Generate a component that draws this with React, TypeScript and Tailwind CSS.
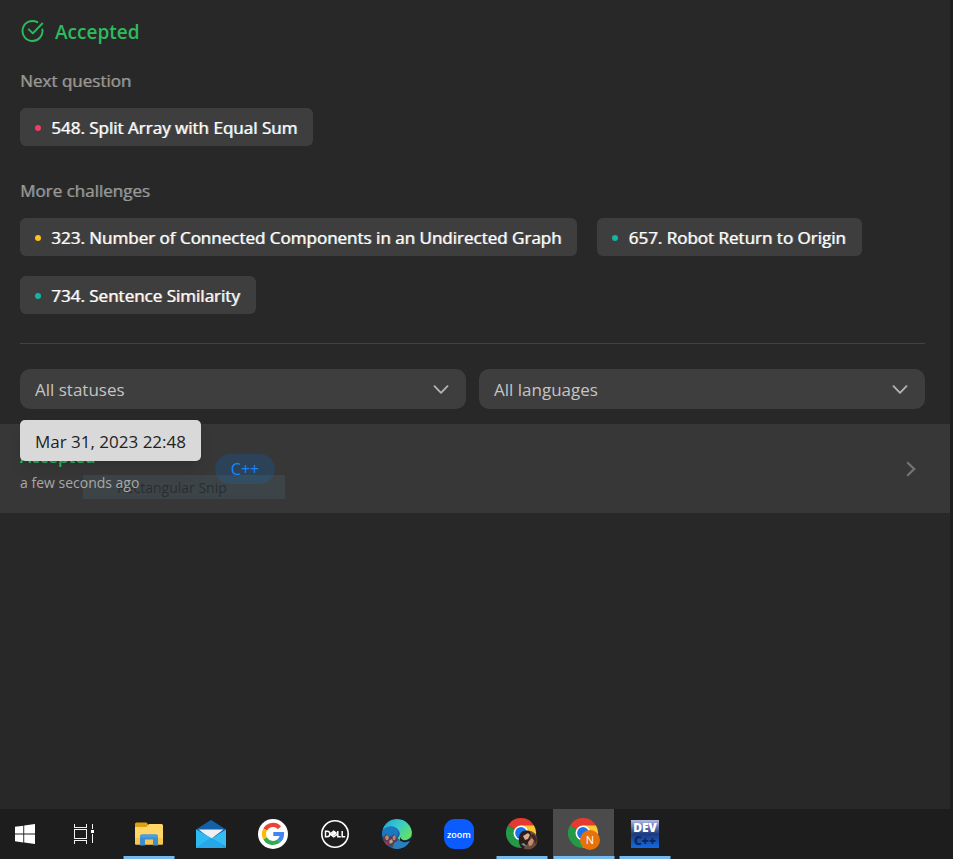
import type { ReactNode } from "react";

type Challenge = { title: string; dot: string };

const nextQuestion: Challenge[] = [
  { title: "548. Split Array with Equal Sum", dot: "bg-[#ef3e64]" },
];

const moreChallenges: Challenge[] = [
  { title: "323. Number of Connected Components in an Undirected Graph", dot: "bg-[#ffc01e]" },
  { title: "657. Robot Return to Origin", dot: "bg-[#10b5a3]" },
  { title: "734. Sentence Similarity", dot: "bg-[#10b5a3]" },
];

function ChallengeList({ heading, items }: { heading: string; items: Challenge[] }) {
  return (
    <section className="text-[17px]">
      <h2 className="leading-[26px] text-[#9a9a9a] [text-shadow:1px_0_0_#9a9a9a80]">{heading}</h2>
      <div className="mt-3.5 flex flex-wrap gap-5">
        {items.map((item) => (
          <a
            key={item.title}
            href="#"
            className="flex h-[38px] items-center gap-2.5 rounded-md bg-[#3e3e3e] px-4 pt-0.5 pl-[15px] whitespace-nowrap text-white [text-shadow:1px_0_0_#ffffff99]"
          >
            <span className={`size-1.5 rounded-full ${item.dot}`} />
            {item.title}
          </a>
        ))}
      </div>
    </section>
  );
}

function Filter({ label, options }: { label: string; options: string[] }) {
  return (
    <div className="relative flex-1">
      <select
        aria-label={label}
        className="h-10 w-full appearance-none rounded-[10px] bg-[#3e3e3e] px-[15px] pt-0.5 text-[17px] text-[#c4c4c4] outline-none"
      >
        {options.map((option) => (
          <option key={option}>{option}</option>
        ))}
      </select>
      <svg viewBox="0 0 16 10" className="pointer-events-none absolute top-4 right-[17px] h-[10px] w-4" fill="none" stroke="#b4b4b4" strokeWidth="1.8" strokeLinecap="round" strokeLinejoin="round">
        <path d="M1.500 1.200 8 7.800l6.500-6.600" />
      </svg>
    </div>
  );
}

function WindowsIcon() {
  return (
    <svg viewBox="0 0 20 20" className="size-5" fill="#fff">
      <path d="M0 2.800 8.300 1.700v7.900H0zM9.200 1.500 20 0v9.600H9.200zM0 10.500h8.300v7.900L0 17.200zM9.200 10.500H20V20L9.200 18.500z" />
    </svg>
  );
}

function TaskViewIcon() {
  return (
    <svg viewBox="0 0 20 20" className="size-5" fill="none" stroke="#f2f2f2" shapeRendering="crispEdges">
      <path d="M.5 5.500h12v9H.5zM.5 0v3.500h12V0M.5 20v-3.500h12V20M18.500 0v5M18.500 10v9" />
      <path d="M17 6h3v3h-3z" fill="#fff" stroke="none" />
    </svg>
  );
}

function ExplorerIcon() {
  return (
    <svg viewBox="0 0 28 24" className="h-6 w-7">
      <path d="M0 2q0-1.500 1.500-1.500h10L13.500 3v4H0z" fill="#dfa00f" />
      <path d="M0 5h11.500L14 2h12.500q1.500 0 1.500 1.500v18q0 1-1 1H1q-1 0-1-1z" fill="#ffd667" />
      <path d="M0 16h28v5.500q0 1-1 1H1q-1 0-1-1z" fill="#f6c64f" />
      <path d="M5 23.500V14.500q0-2 2-2h14q2 0 2 2v9h-5v-6h-8v6z" fill="#3d8ed0" />
      <path d="M5 15.500v-1q0-2 2-2h14q2 0 2 2v1z" fill="#4b9fe0" />
    </svg>
  );
}

function MailIcon() {
  return (
    <svg viewBox="0 0 30 28" className="h-7 w-[30px]">
      <path d="M0 9.500 14 .4q1-.6 2 0L30 9.500V15H0z" fill="#1260a8" />
      <path d="M30 9.500V28H0z" fill="#34bdf2" />
      <path d="M2.500 9.500h25L15 19z" fill="#eef0f4" />
      <path d="M0 9.500 30 26.500q0 1.500-1.500 1.500H1.500Q0 28 0 26.500z" fill="#2196df" />
      <path d="M0 9.500 15 18 0 28z" fill="#2dbaf2" />
      <path d="M0 28 15 18 26 24.200 28 28z" fill="#27a6e8" />
    </svg>
  );
}

function GoogleIcon() {
  return (
    <svg viewBox="0 0 30 30" className="size-[30px]" fill="none" strokeWidth="4.200">
      <circle cx="15" cy="15" r="15" fill="#fff" />
      <path d="M7.200 10.500A9 9 0 0 1 21.500 8.700" stroke="#ea4335" />
      <path d="M7.200 19.500A9 9 0 0 1 7.200 10.500" stroke="#fbbc05" />
      <path d="M21 21.700A9 9 0 0 1 7.200 19.500" stroke="#34a853" />
      <path d="M15.300 15H24A9 9 0 0 1 21 21.700" stroke="#4285f4" />
    </svg>
  );
}

function DellIcon() {
  return (
    <svg viewBox="0 0 30 30" className="size-[30px]" fill="none" stroke="#fff">
      <circle cx="15" cy="15" r="13.200" strokeWidth="1.600" />
      <path d="M5.500 12.200v5.600H7q2.800 0 2.800-2.800T7 12.200zM10 15l3.700-2.800 2.300 1.700-3.400 2.600M11.300 16l3.400-2.600M10 15l3.700 2.800 3.300-2.500M17.800 12v5.800h3M22.200 12v5.800h3" strokeWidth="1.500" />
    </svg>
  );
}

function EdgeIcon() {
  return (
    <svg viewBox="0 0 30 30" className="size-[30px]">
      <defs>
        <linearGradient id="edge-top" x1="0" y1="0" x2="1" y2=".6">
          <stop offset="0" stopColor="#1fa0cf" />
          <stop offset=".5" stopColor="#35c9cf" />
          <stop offset="1" stopColor="#62e06a" />
        </linearGradient>
        <clipPath id="edge-disc">
          <circle cx="15" cy="15" r="15" />
        </clipPath>
      </defs>
      <g clipPath="url(#edge-disc)">
        <path d="M0 0h30v30H0z" fill="#1563a6" />
        <path d="M0 12Q3 0 15 0q15 1 15 13 0 8-9 8.500-5-.5-5-3 3-3 1-6.500Q14 7 8.500 7.500 3 8 0 12z" fill="url(#edge-top)" />
        <path d="M0 12q3-4.500 8.500-4.500 6 0 8.500 4.500l-2 5H0z" fill="#1878c0" />
        <path d="M18 18q1 3 4 3.500 5 0 8-4v4.500l-6 2-6-2z" fill="#1d1d1d" />
        <path d="M0 20 4 15l4 3 4-3 3 4v6l-4 3-5-2-5 1z" fill="#5a3f4c" />
        <path d="m12 24 5-3 5 2.500 6-1.500-6 8H10z" fill="#2a7fc0" />
        <path d="m3 18 2-2 2 2-1 3-2 0z" fill="#b98a7a" />
        <path d="m10.500 18 2-2 1.500 2-1 3h-2z" fill="#b08577" />
        <path d="m7 22 3-2 1 3-3 2z" fill="#c99c8a" />
        <path d="m1 23 4-1 2 4-4 1z" fill="#a0365a" />
      </g>
    </svg>
  );
}

function ZoomIcon() {
  return (
    <span className="flex size-[30px] items-center justify-center rounded-[11px] bg-[#0b5cff] text-[9px] leading-none font-semibold text-white">
      zoom
    </span>
  );
}

function ChromeIcon({ children }: { children: ReactNode }) {
  return (
    <svg viewBox="0 0 32 32" className="size-8">
      <path d="M15 15 2 7.500A15 15 0 0 1 28 7.500z" fill="#e33b2e" />
      <path d="M15 15 2 7.500A15 15 0 0 0 15 30l6.500-11.200z" fill="#249a46" />
      <path d="M15 7.500h13A15 15 0 0 1 15 30l6.500-11.200z" fill="#fcc934" />
      <circle cx="15" cy="15" r="7.500" fill="#fff" />
      <circle cx="15" cy="15" r="5.900" fill="#1a73e8" />
      {children}
    </svg>
  );
}

function PhotoBadge() {
  return (
    <g>
      <circle cx="22" cy="22" r="9.500" fill="#6b4c3e" />
      <path d="M13 23q-1-7 4-10 7-2 8 3l-2 8-6 7q-4-3-4-8z" fill="#2b1d1c" />
      <path d="m17 18 5-3 2 2-2 4-3 1z" fill="#e0aa8c" />
      <path d="m22 24 4-4 2 2-2 5-3 1z" fill="#c98c70" />
      <path d="m24 17 4-1 3 5-1 5-3-5z" fill="#3d2923" />
      <path d="m15 26 3-1 3 4-3-1z" fill="#7f8a8a" />
    </g>
  );
}

function LetterBadge() {
  return (
    <g>
      <circle cx="22" cy="22" r="10" fill="#e8710a" />
      <text x="22" y="26" textAnchor="middle" fontSize="11" fill="#fff">N</text>
    </g>
  );
}

function DevIcon() {
  return (
    <span className="flex size-7 flex-col items-center justify-center bg-linear-to-b from-[#b4b9e6] via-[#1d3a80] to-[#0a6be6] text-[12px] leading-[13px] font-extrabold text-white">
      <span>DEV</span>
      <span className="text-[#06285e]">C++</span>
    </span>
  );
}

type Task = { name: string; icon: ReactNode; width: string; bar?: string; active?: boolean };

const tasks: Task[] = [
  { name: "Start", icon: <WindowsIcon />, width: "w-[50px]" },
  { name: "Task View", icon: <TaskViewIcon />, width: "w-[68px]" },
  { name: "File Explorer", icon: <ExplorerIcon />, width: "w-[62px]", bar: "w-[51px]" },
  { name: "Mail", icon: <MailIcon />, width: "w-[62px]" },
  { name: "Google", icon: <GoogleIcon />, width: "w-[62px]" },
  { name: "Dell", icon: <DellIcon />, width: "w-[62px]" },
  { name: "Edge", icon: <EdgeIcon />, width: "w-[62px]" },
  { name: "Zoom", icon: <ZoomIcon />, width: "w-[62px]" },
  { name: "Chrome, personal", icon: <ChromeIcon><PhotoBadge /></ChromeIcon>, width: "w-[63px]", bar: "w-[51px]" },
  { name: "Chrome, N", icon: <ChromeIcon><LetterBadge /></ChromeIcon>, width: "w-[61px]", bar: "w-full", active: true },
  { name: "Dev-C++", icon: <DevIcon />, width: "w-[62px]", bar: "w-[51px]" },
];

function Taskbar() {
  return (
    <nav className="flex h-[50px] overflow-hidden bg-[#1d1d1d]">
      {tasks.map((task) => (
        <button
          key={task.name}
          type="button"
          aria-label={task.name}
          className={`relative flex shrink-0 items-center justify-center ${task.width} ${task.active ? "bg-[#4b4b4b]" : ""}`}
        >
          {task.icon}
          {task.bar && (
            <span className={`absolute bottom-0 left-1/2 h-[3px] -translate-x-1/2 bg-[#76b9ed] ${task.bar}`} />
          )}
        </button>
      ))}
    </nav>
  );
}

export default function App() {
  return (
    <div className="flex min-h-screen flex-col bg-[#1d1d1d] font-['Open_Sans','Noto_Sans',sans-serif]">
      <main className="mr-[3px] flex-1 bg-[#282828]">
        <div className="pt-4 pr-[25px] pl-5">
          <h1 className="flex items-start gap-2.5 text-[19px] leading-8 font-semibold text-[#2cbb5d]">
            <svg viewBox="0 0 25 24" className="mt-[3px] h-6 w-[25px]" fill="none" stroke="currentColor" strokeWidth="1.900" strokeLinecap="round" strokeLinejoin="round">
              <path d="M17.300 3.200A10 10 0 1 0 22.400 10.500" />
              <path d="m8.800 10.400 4 4L22.300 4.500" />
            </svg>
            Accepted
          </h1>
          <div className="mt-5 flex flex-col gap-8">
            <ChallengeList heading="Next question" items={nextQuestion} />
            <ChallengeList heading="More challenges" items={moreChallenges} />
          </div>
          <hr className="mt-[29px] border-[#424242]" />
          <div className="mt-[25px] flex gap-[13px]">
            <Filter label="Status" options={["All statuses", "Accepted"]} />
            <Filter label="Language" options={["All languages", "C++"]} />
          </div>
        </div>

        <div className="relative mt-[15px] flex h-[89px] items-center bg-[#373737] pr-[34px] pl-5">
          <div className="absolute top-[51px] left-[83px] flex h-6 w-[202px] items-center bg-[#5b94a8]/15 pl-[34px] text-[14px] text-black/35">
            Rectangular Snip
          </div>
          <div className="relative w-[195px]">
            <div className="text-[17px] leading-7 font-semibold text-[#2cbb5d]">Accepted</div>
            <div className="text-[14px] leading-6 text-[#a8a8a8]">a few seconds ago</div>
          </div>
          <span className="flex h-[30px] w-[60px] items-center justify-center rounded-full bg-[#2c4258] text-[16px] text-[#1686ff]">
            C++
          </span>
          <svg viewBox="0 0 10 16" className="ml-auto h-4 w-[10px]" fill="none" stroke="#747474" strokeWidth="2.200">
            <path d="m1.200 1.200 7 6.800-7 6.800" />
          </svg>
          <div role="tooltip" className="absolute -top-1 left-5 flex h-[41px] items-center rounded-[5px] bg-[#d9d9d9] px-[15px] pt-0.5 text-[17px] text-[#222] shadow-lg">
            Mar 31, 2023 22:48
          </div>
        </div>
      </main>
      <Taskbar />
    </div>
  );
}
